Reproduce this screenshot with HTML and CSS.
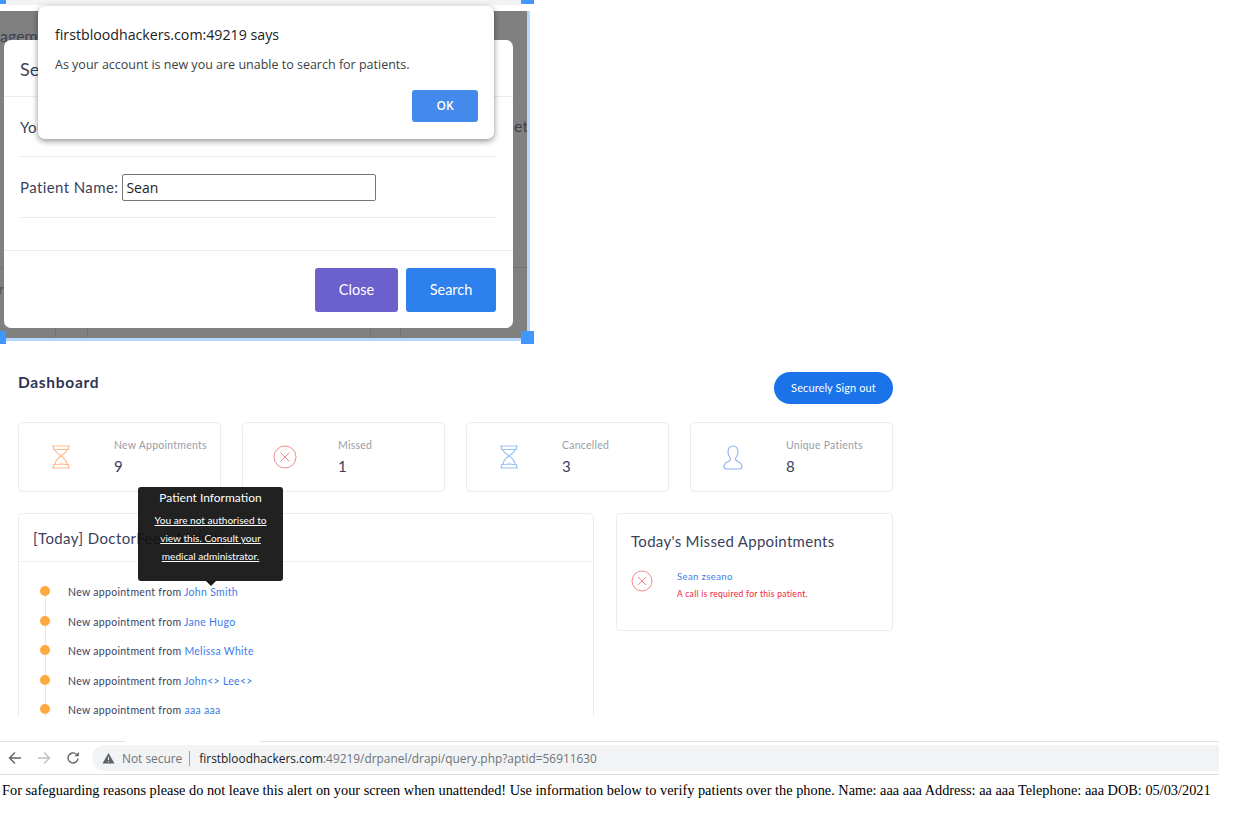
FILE: index.html
```html
<!DOCTYPE html>
<html lang="en">
<head>
	<meta charset="UTF-8">
	<title>firstbloodhackers notes</title>
	<link rel="stylesheet" href="styles.css">
</head>
<body>
	<section class="capture">
		<div class="tabstrip"></div>
		<div class="backdrop">
			<span class="behind behind-title">agement</span>
			<span class="behind behind-et">et</span>
			<span class="behind behind-frag">r</span>
			<span class="rule-h"></span>
			<span class="rule-v rv1"></span>
			<span class="rule-v rv2"></span>
			<span class="rule-v rv3"></span>
			<span class="rule-v rv4"></span>
			<div class="modal">
				<div class="modal-head">Search Patients</div>
				<div class="modal-body">
					<div class="modal-row first">You can search for patients</div>
					<div class="modal-row second">
						<label for="patient">Patient Name:</label>
						<input type="text" id="patient" value="Sean">
					</div>
				</div>
				<div class="modal-foot">
					<button class="btn btn-close">Close</button>
					<button class="btn btn-search">Search</button>
				</div>
			</div>
		</div>
		<span class="handle h-tl"></span>
		<span class="handle h-tr"></span>
		<span class="handle h-bl"></span>
		<span class="handle h-br"></span>
		<div class="alert">
			<div class="alert-title">firstbloodhackers.com:49219 says</div>
			<div class="alert-text">As your account is new you are unable to search for patients.</div>
			<div class="alert-foot"><button class="alert-ok">OK</button></div>
		</div>
	</section>

	<main class="dash">
		<div class="dash-top">
			<h1>Dashboard</h1>
			<button class="signout">Securely Sign out</button>
		</div>
		<div class="cards">
			<div class="card">
				<div class="card-icon">
					<svg width="22" height="24" viewBox="0 0 22 24" fill="none" stroke="#ffbd8e" stroke-width="1.200"><path d="M2 1h18M2 23h18M3.500 1v3.500h15V1M3.500 23v-3.500h15V23M5 4.500c0 5 12 6.500 12 15M17 4.500c0 5-12 6.500-12 15"/><path d="M7 19.500l4-2.500 4 2.500z" fill="#ffe0ca" stroke="none"/></svg>
				</div>
				<div><div class="card-label">New Appointments</div><div class="card-value">9</div></div>
			</div>
			<div class="card">
				<div class="card-icon">
					<svg width="24" height="24" viewBox="0 0 24 24" fill="none" stroke="#f48a8a" stroke-width="1"><circle cx="12" cy="12" r="11"/><path d="M7.500 7.500l9 9M16.500 7.500l-9 9"/></svg>
				</div>
				<div><div class="card-label">Missed</div><div class="card-value">1</div></div>
			</div>
			<div class="card">
				<div class="card-icon">
					<svg width="22" height="24" viewBox="0 0 22 24" fill="none" stroke="#97c2f7" stroke-width="1.200"><path d="M2 1h18M2 23h18M3.500 1v3.500h15V1M3.500 23v-3.500h15V23M5 4.500c0 5 12 6.500 12 15M17 4.500c0 5-12 6.500-12 15"/><path d="M7 19.500l4-2.500 4 2.500z" fill="#cfe3fb" stroke="none"/></svg>
				</div>
				<div><div class="card-label">Cancelled</div><div class="card-value">3</div></div>
			</div>
			<div class="card">
				<div class="card-icon">
					<svg width="20" height="25" viewBox="0 0 20 25" fill="none" stroke="#8aaff3" stroke-width="1.100"><path d="M10 1c-3.200 0-5 2.200-5 5.500 0 2.500.8 4.500 2 6 .6.800.5 2.500-.5 3.200C4.800 16.800 1 17.500 1 21.500c0 1.500 1 2.500 2.500 2.500h13c1.500 0 2.500-1 2.500-2.500 0-4-3.800-4.700-5.500-5.800-1-.7-1.100-2.400-.5-3.200 1.200-1.500 2-3.500 2-6C15 3.200 13.200 1 10 1z"/></svg>
				</div>
				<div><div class="card-label">Unique Patients</div><div class="card-value">8</div></div>
			</div>
		</div>
		<div class="panels">
			<section class="panel feed">
				<div class="feed-head">[Today] DoctorFeed Activity</div>
				<ul class="timeline">
					<li>New appointment from <a>John Smith</a></li>
					<li>New appointment from <a>Jane Hugo</a></li>
					<li>New appointment from <a>Melissa White</a></li>
					<li>New appointment from <a>John&lt;&gt; Lee&lt;&gt;</a></li>
					<li>New appointment from <a>aaa aaa</a></li>
				</ul>
			</section>
			<section class="panel missed">
				<h2>Today's Missed Appointments</h2>
				<div class="missed-row">
					<svg width="22" height="22" viewBox="0 0 22 22" fill="none" stroke="#f48a8a" stroke-width="1"><circle cx="11" cy="11" r="10"/><path d="M7 7l8 8M15 7l-8 8"/></svg>
					<div>
						<a class="missed-name">Sean zseano</a>
						<div class="missed-note">A call is required for this patient.</div>
					</div>
				</div>
			</section>
		</div>
		<div class="tip">
			<div class="tip-title">Patient Information</div>
			<a class="tip-text">You are not authorised to view this. Consult your medical administrator.</a>
		</div>
	</main>

	<section class="browser">
		<div class="tabline"><span></span><span class="tab-fill"></span></div>
		<div class="toolbar">
			<svg class="nav" width="14" height="14" viewBox="0 0 14 14" fill="none" stroke="#5f6368" stroke-width="1.400"><path d="M13 7H2M7 1.500L1.500 7 7 12.500"/></svg>
			<svg class="nav" width="14" height="14" viewBox="0 0 14 14" fill="none" stroke="#bdc1c6" stroke-width="1.400"><path d="M1 7h11M7 1.500L12.500 7 7 12.500"/></svg>
			<svg class="nav" width="14" height="14" viewBox="0 0 14 14" fill="none" stroke="#5f6368" stroke-width="1.400"><path d="M12 7.500A5 5 0 1 1 10.500 3.300"/><path d="M12.800 1v4.300H8.500z" fill="#5f6368" stroke="none"/></svg>
			<div class="omnibox">
				<svg width="13" height="12" viewBox="0 0 13 12"><path d="M6.500 1L12.500 11.500H.5z" fill="#5f6368"/><path d="M6.500 5v3M6.500 9v1" stroke="#f1f3f4" stroke-width="1"/></svg>
				<span class="not-secure">Not secure</span>
				<span class="omni-sep"></span>
				<span class="url"><b>firstbloodhackers.com</b>:49219/drpanel/drapi/query.php?aptid=56911630</span>
			</div>
		</div>
		<p class="alert-page">For safeguarding reasons please do not leave this alert on your screen when unattended! Use information below to verify patients over the phone. Name: aaa aaa Address: aa aaa Telephone: aaa DOB: 05/03/2021</p>
	</section>
</body>
</html>
```

FILE: styles.css
```css
* {
	box-sizing: border-box;
}
body {
	margin: 0px;
	background: #fff;
	font-family: "Lato", sans-serif;
	color: #3b3f5c;
}
button {
	border: none;
	font-family: inherit;
}

/* top capture */
.capture {
	height: 345px;
	position: relative;
	width: 534px;
}
.tabstrip {
	background: linear-gradient(#f1f3f4 5px, #fff 5px);
	height: 11px;
	margin-left: 6px;
	width: 515px;
}
.backdrop {
	background: #808080;
	box-shadow: 3px 0px 0px #b3d7ff, 0px 3px 0px #b3d7ff;
	height: 327px;
	overflow: hidden;
	padding: 29px 0px 0px 4px;
	position: relative;
	width: 527px;
}
.behind {
	color: #3e4050;
	font-size: 16px;
	position: absolute;
}
.behind-title {
	left: 0px;
	top: 15px;
}
.behind-et {
	left: 514px;
	top: 105px;
}
.behind-frag {
	color: #555;
	font-size: 13px;
	left: -1px;
	top: 270px;
}
.rule-h {
	background: #757575;
	height: 1px;
	left: 0px;
	position: absolute;
	top: 256px;
	width: 100%;
}
.rule-v {
	background: #757575;
	bottom: 0px;
	height: 12px;
	position: absolute;
	width: 1px;
}
.rv1 { left: 55px; }
.rv2 { left: 87px; }
.rv3 { left: 370px; }
.rv4 { left: 400px; }

.modal {
	background: #fff;
	border-radius: 7px;
	height: 288px;
	position: relative;
	width: 509px;
}
.modal-head {
	border-bottom: 1px solid #ececec;
	font-size: 18px;
	height: 57px;
	padding: 18px 16px;
}
.modal-body {
	border-bottom: 1px solid #ececec;
	height: 154px;
	padding: 0px 17px 0px 16px;
}
.modal-row {
	align-items: center;
	border-bottom: 1px solid #ececec;
	display: flex;
	font-size: 15px;
	letter-spacing: 0.4px;
}
.modal-row.first {
	height: 60px;
}
.modal-row.second {
	gap: 4px;
	height: 61px;
}
.modal-row input {
	border: 1px solid #767676;
	border-radius: 2px;
	color: #222;
	font: 14px "Open Sans", sans-serif;
	height: 27px;
	padding: 0px 3px;
	width: 254px;
}
.modal-foot {
	display: flex;
	gap: 8px;
	justify-content: flex-end;
	padding: 17px 17px;
}
.btn {
	border-radius: 3px;
	color: #fff;
	font-size: 14.500px;
	height: 44px;
	padding-bottom: 3px;
}
.btn-close {
	background: #6c60cd;
	width: 83px;
}
.btn-search {
	background: #2e80ec;
	width: 90px;
}
.handle {
	background: #3f97ff;
	position: absolute;
}
.h-tl { height: 4px; left: 0px; top: 0px; width: 6px; }
.h-tr { height: 4px; left: 521px; top: 0px; width: 13px; }
.h-bl { height: 13px; left: 0px; top: 331px; width: 6px; }
.h-br { height: 13px; left: 521px; top: 331px; width: 13px; }

.alert {
	background: #fff;
	border-radius: 7px;
	box-shadow: 0px 2px 6px rgba(0,0,0,.45);
	color: #3c4043;
	font-family: "Open Sans", sans-serif;
	height: 133px;
	left: 38px;
	padding: 19px 16px 0px 17px;
	position: absolute;
	top: 6px;
	width: 456px;
}
.alert-title {
	color: #202124;
	font-size: 14.200px;
	line-height: 20px;
}
.alert-text {
	font-size: 12.500px;
	line-height: 18px;
	margin-top: 11px;
}
.alert-foot {
	display: flex;
	justify-content: flex-end;
	margin-top: 16px;
}
.alert-ok {
	background: #438aec;
	border-radius: 3px;
	color: #fff;
	font: 600 12px "Open Sans", sans-serif;
	height: 32px;
	padding-bottom: 2px;
	width: 66px;
}

/* dashboard */
.dash {
	height: 372px;
	overflow: hidden;
	padding: 27px 0px 0px 18px;
	position: relative;
	width: 910px;
}
.dash-top {
	display: flex;
	height: 32px;
	justify-content: space-between;
	width: 875px;
}
.dash-top h1 {
	color: #2f3557;
	font-size: 15.500px;
	font-weight: 700;
	letter-spacing: 0.7px;
	line-height: 20px;
	margin: 0px;
}
.signout {
	background: #1a73e8;
	border-radius: 16px;
	color: #fff;
	font-size: 11px;
	height: 32px;
	letter-spacing: 0.1px;
	padding-bottom: 2px;
	width: 119px;
}
.cards {
	display: grid;
	gap: 21px;
	grid-template-columns: repeat(4, 1fr);
	margin-top: 18px;
	width: 875px;
}
.card {
	align-items: flex-start;
	background: #fff;
	border: 1px solid #ececec;
	border-radius: 4px;
	display: flex;
	height: 70px;
	padding: 16px 0px 0px 0px;
}
.card-icon {
	align-items: center;
	display: flex;
	height: 36px;
	justify-content: center;
	width: 84px;
}
.card-icon + div {
	margin-left: 11px;
}
.card-label {
	color: #9a9ca8;
	font-size: 10.500px;
	letter-spacing: 0.25px;
	line-height: 13px;
}
.card-value {
	font-size: 15px;
	line-height: 18px;
	margin-top: 5px;
}
.panels {
	align-items: flex-start;
	display: flex;
	gap: 22px;
	margin-top: 21px;
	width: 875px;
}
.panel {
	border: 1px solid #ececec;
	border-radius: 4px;
}
.feed {
	height: 260px;
	width: 576px;
}
.feed-head {
	border-bottom: 1px solid #f0f0f0;
	font-size: 15px;
	height: 48px;
	letter-spacing: 0.4px;
	padding: 15px 14px;
}
.timeline {
	font-size: 10.500px;
	letter-spacing: 0.3px;
	list-style: none;
	margin: 0px;
	padding: 15px 0px 0px 49px;
	position: relative;
}
.timeline li {
	height: 29.500px;
	line-height: 30px;
	position: relative;
}
.timeline li::before {
	background: #ffa93f;
	border-radius: 50%;
	content: "";
	height: 10px;
	left: -28px;
	position: absolute;
	top: 9px;
	width: 10px;
	z-index: 1;
}
.timeline li::after {
	background: #e6e6e6;
	content: "";
	height: 30px;
	left: -23px;
	position: absolute;
	top: 14px;
	width: 1px;
}
.timeline a, .missed-name {
	color: #3c7ce8;
}
.missed {
	height: 118px;
	padding: 18px 14px;
	width: 277px;
}
.missed h2 {
	font-size: 15px;
	font-weight: 400;
	letter-spacing: 0.3px;
	line-height: 18px;
	margin: 0px;
}
.missed-row {
	display: flex;
	gap: 24px;
	margin-top: 20px;
}
.missed-name {
	display: block;
	font-size: 9.500px;
	letter-spacing: 0.4px;
	line-height: 14px;
}
.missed-note {
	color: #f0203a;
	font-size: 8.500px;
	letter-spacing: 0.3px;
	line-height: 14px;
	margin-top: 3px;
}
.tip {
	background: rgba(16,16,16,.93);
	border-radius: 3px;
	color: #fff;
	height: 94px;
	left: 138px;
	padding: 4px 12px;
	position: absolute;
	text-align: center;
	top: 142px;
	width: 145px;
}
.tip::after {
	border: 5px solid transparent;
	border-bottom-width: 0px;
	border-top-color: #1a1a1a;
	content: "";
	left: 68px;
	position: absolute;
	top: 94px;
}
.tip-title {
	font-size: 12px;
	line-height: 14px;
}
.tip-text {
	display: block;
	font-size: 10.100px;
	line-height: 18px;
	margin-top: 6px;
	text-decoration: underline;
}

/* browser strip */
.browser {
	height: 122px;
	padding-top: 24px;
}
.tabline {
	display: flex;
	height: 1px;
	width: 1219px;
}
.tabline span {
	background: #dfe1e5;
	width: 125px;
}
.tabline .tab-fill {
	flex: 1;
	margin-left: 135px;
}
.toolbar {
	align-items: center;
	border-bottom: 1px solid #dadce0;
	display: flex;
	height: 33px;
	padding-left: 8px;
	width: 1219px;
}
.nav {
	margin-right: 15px;
}
.omnibox {
	align-items: center;
	background: #f1f3f4;
	border-radius: 13px 0px 0px 13px;
	display: flex;
	flex: 1;
	font-family: "Open Sans", sans-serif;
	font-size: 11.900px;
	height: 26px;
	margin-left: -3px;
	padding-left: 10px;
}
.not-secure {
	color: #6f7378;
	margin-left: 7px;
}
.omni-sep {
	background: #9aa0a6;
	height: 15px;
	margin: 0px 9px 0px 7px;
	width: 1px;
}
.url {
	color: #6f7378;
}
.url b {
	color: #202124;
	font-weight: 400;
}
.alert-page {
	color: #000;
	font: 14.330px "Liberation Serif", serif;
	margin: 7px 0px 0px 2px;
	white-space: nowrap;
}
```
